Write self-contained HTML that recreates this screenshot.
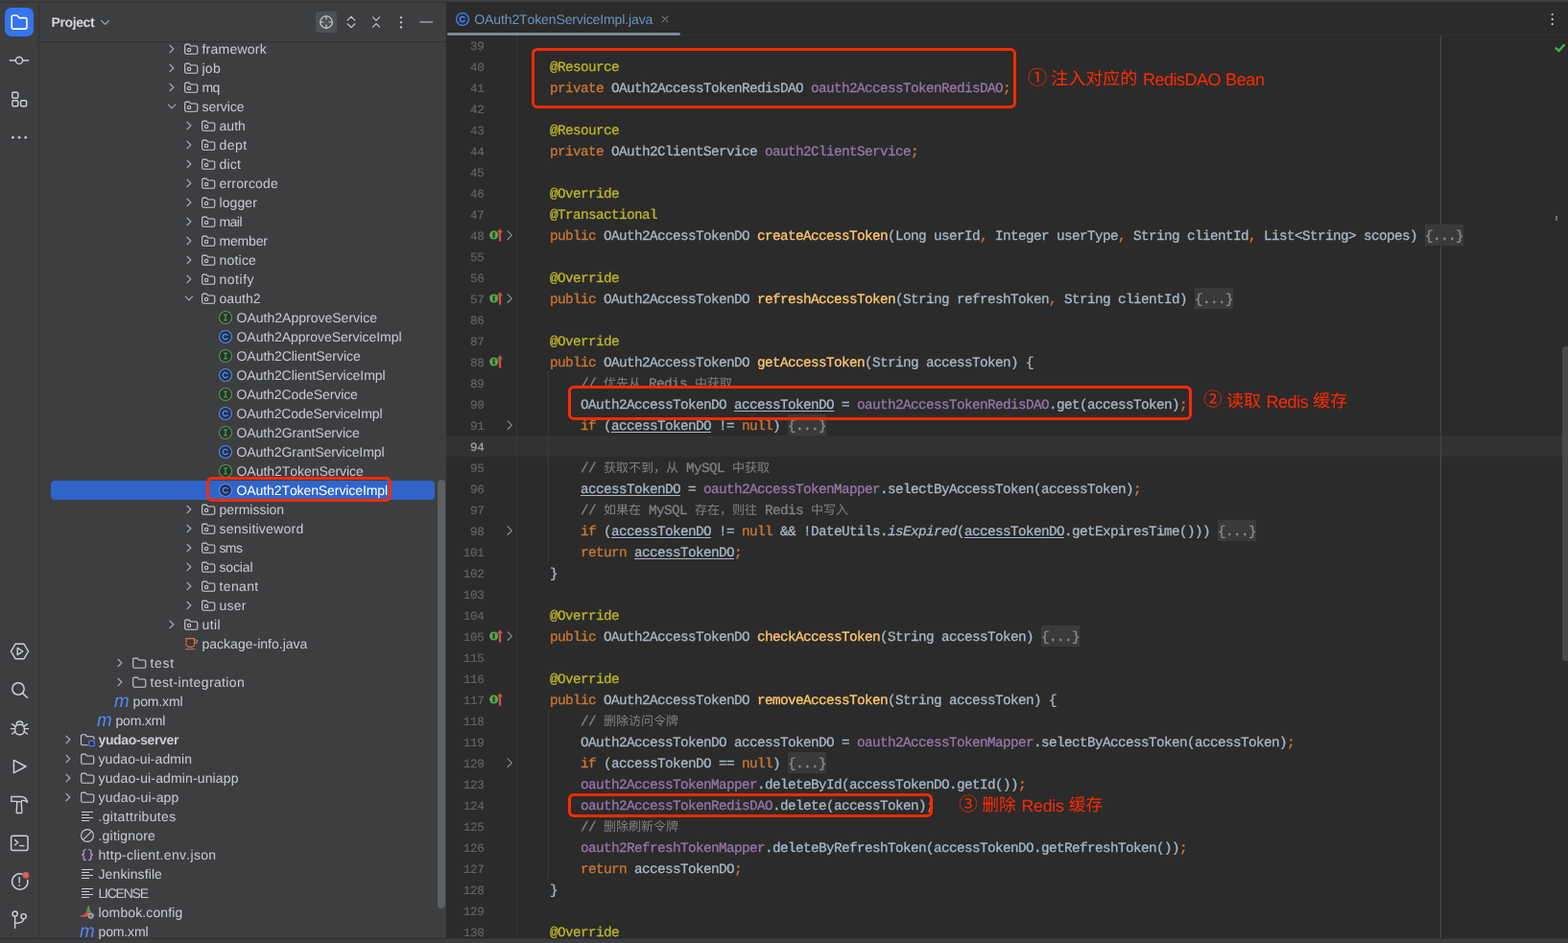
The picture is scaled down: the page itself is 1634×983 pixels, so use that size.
<!DOCTYPE html>
<html lang="en"><head><meta charset="utf-8"><title>OAuth2TokenServiceImpl.java</title>
<style>
*{box-sizing:border-box;margin:0;padding:0}
html,body{width:1634px;height:983px;overflow:hidden;background:#2b2b2b}
body{position:relative;text-rendering:geometricPrecision;font-kerning:none;font-family:"Liberation Sans",sans-serif;font-size:14px;color:#c9cbcf}
.abs{position:absolute}
#TL{position:absolute;left:0;top:0;width:465px;height:983px}
#L{position:absolute;left:0;top:0;width:1634px;height:983px;will-change:transform}
svg{display:block;overflow:visible}
svg.cj{display:inline-block;vertical-align:-0.12em;fill:currentColor}
.ic{position:absolute;fill:none;stroke:#ced0d6;stroke-width:1.2;stroke-linecap:round;stroke-linejoin:round}
#strip{position:absolute;left:0;top:3px;width:41px;height:975px;background:#3d3e40;border-right:1px solid #323232}
#panel{position:absolute;left:41px;top:3px;width:424px;height:975px;background:#3d3e40;overflow:hidden}
#phead{position:absolute;left:0;top:0;width:424px;height:41px;background:#3d3e40;border-bottom:1px solid #323232;z-index:3}
#topband{position:absolute;left:0;top:0;width:1634px;height:3px;background:#3d3e40;border-bottom:1px solid #323232}
#botband{position:absolute;left:0;top:978px;width:1634px;height:5px;background:#3d3e40;border-top:1px solid #323232}
.row{position:absolute;left:0;width:424px;height:20px;line-height:20px;white-space:nowrap}
.row .lb{position:absolute;top:0;white-space:pre}
.row b{font-weight:bold}
#editor{position:absolute;left:465px;top:2px;width:1169px;height:976px;background:#2b2b2b;overflow:hidden}
.ln{position:absolute;left:0;width:1169px;height:22px;line-height:22px;white-space:pre}
.no{position:absolute;right:1130px;top:0;font-family:"Liberation Mono",monospace;font-size:12.6px;letter-spacing:-0.36px;color:#606366;-webkit-text-stroke:0.2px currentColor}
.cd{position:absolute;left:76px;top:0;font-family:"Liberation Mono",monospace;font-size:14.3px;letter-spacing:-0.58px;color:#a9b7c6;-webkit-text-stroke:0.3px currentColor}
.cd svg.cj{vertical-align:-2px;margin:0}
.k{color:#cc7832}.a{color:#bbb529}.m{color:#ffc66d}.f{color:#9876aa}.c{color:#808080}
.u{text-decoration:underline;text-underline-offset:2px;text-decoration-thickness:1px}
.i{font-style:italic}
.fd{display:inline-block;height:22px;background:#3a3a3a;color:#8c8c8c}
.rb{position:absolute;border:solid #ff2a00;border-width:3.3px 3.6px;border-radius:6px}
.an{position:absolute;color:#ff2a00;font-size:18px;line-height:22px;white-space:pre}
.cjt{position:absolute;white-space:pre;font-family:"Liberation Sans","Noto Sans CJK SC",sans-serif;letter-spacing:0}
.cjc{color:#808080;font-size:13px;line-height:13px;height:13px}
.cja{color:#ff2a00}
</style></head>
<body><div id="L"><div id="topband"></div><div id="botband"></div><div id="strip"></div><div class="abs" style="left:5px;top:8px;width:30px;height:30px;border-radius:7px;background:#3574f0"></div><svg class="ic" style="left:10px;top:13px;width:20px;height:20px;" viewBox="0 0 20 20"><path d="M2.2 4.6a1.6 1.6 0 0 1 1.6-1.6h3.9l2.2 2.6h6.4a1.6 1.6 0 0 1 1.6 1.6v8.3a1.6 1.6 0 0 1-1.6 1.6h-12.5a1.6 1.6 0 0 1-1.6-1.6z" stroke="#fff" stroke-width="1.6"/></svg><svg class="ic" style="left:10px;top:53px;width:20px;height:20px;stroke-width:1.45" viewBox="0 0 20 20"><path d="M0.4 10h5.4M14.2 10h5.4"/><circle cx="10" cy="10" r="3.6"/></svg><svg class="ic" style="left:10px;top:93px;width:20px;height:20px;stroke-width:1.45" viewBox="0 0 20 20"><rect x="2.8" y="3.2" width="6" height="6" rx="1.5"/><rect x="2.8" y="11.7" width="6" height="6" rx="1.5"/><rect x="11.6" y="11.7" width="6" height="6" rx="1.5"/></svg><svg class="ic" style="left:10px;top:133px;width:20px;height:20px;fill:#ced0d6;stroke:none" viewBox="0 0 20 20"><circle cx="3.4" cy="10.3" r="1.35"/><circle cx="10.1" cy="10.3" r="1.35"/><circle cx="16.7" cy="10.3" r="1.35"/></svg><svg class="ic" style="left:10px;top:669px;width:21px;height:20px;stroke-width:1.45" viewBox="0 0 21 20"><path d="M6 2.3h9l4.6 7.7-4.6 7.7h-9l-4.6-7.7z"/><path d="M8.2 6.4l5.6 3.6-5.6 3.6z"/></svg><svg class="ic" style="left:9px;top:708px;width:22px;height:22px;stroke-width:1.5" viewBox="0 0 22 22"><circle cx="10" cy="10" r="6.2"/><path d="M14.6 14.6l4.8 4.6"/></svg><svg class="ic" style="left:10px;top:748px;width:21px;height:22px;stroke-width:1.45" viewBox="0 0 21 22"><path d="M7.2 7.2a3.3 3.3 0 0 1 6.6 0"/><rect x="5.6" y="7.2" width="9.8" height="10.6" rx="4.6"/><path d="M5.4 11.6h-4M15.6 11.6h4M5.8 8.8l-3.2-2M15.2 8.8l3.2-2M5.8 14.8l-3.2 2.2M15.2 14.8l3.2 2.2"/></svg><svg class="ic" style="left:10px;top:789px;width:21px;height:20px;stroke-width:1.5" viewBox="0 0 21 20"><path d="M4.4 3.4l12.6 6.6-12.6 6.6z"/></svg><svg class="ic" style="left:9px;top:828px;width:22px;height:22px;stroke-width:1.4" viewBox="0 0 22 22"><path d="M2.800 2.500h10.400c3.200 0 5.400 2.200 6.400 5.700c-1.800-1.600-3.400-2-5.800-1.800l-0.400 1.200h-4.800l-0.400-0.200h-5.400z"/><path d="M8.800 7.600l-0.600 10.800a1 1 0 0 0 1 1.100h3.600a1 1 0 0 0 1-1.100l-0.600-10.800"/></svg><svg class="ic" style="left:10px;top:869px;width:21px;height:20px;stroke-width:1.45" viewBox="0 0 21 20"><rect x="1.6" y="2.2" width="17.4" height="15.2" rx="2"/><path d="M5.6 6.6l3.2 2.6-3.2 2.6M10.6 12.6h4.4"/></svg><svg class="ic" style="left:10px;top:908px;width:22px;height:22px;stroke-width:1.45" viewBox="0 0 22 22"><path d="M13.2 3.2a8.2 8.2 0 1 0 5.6 6.2"/><path d="M10.2 6.6v5.4"/><circle cx="10.2" cy="14.8" r="0.9" fill="#ced0d6" stroke="none"/><circle cx="17" cy="4.4" r="3.3" fill="#db5c5c" stroke="none"/></svg><svg class="ic" style="left:10px;top:948px;width:21px;height:22px;stroke-width:1.45" viewBox="0 0 21 22"><circle cx="5.6" cy="4.6" r="2.6"/><circle cx="14.6" cy="7.2" r="2.6"/><path d="M5.6 7.2v12.2M14.6 9.8c0 3.6-4 4.6-9 4.6"/></svg><div id="panel"></div><div class="abs" style="left:41px;top:43px;width:424px;height:1px;background:#323232"></div><div class="abs" style="left:53.5px;top:13px;height:20px;line-height:20px;font-weight:bold;font-size:14px;color:#d4d6da;white-space:pre;letter-spacing:-0.395px;">Project</div><svg class="ic" style="left:105px;top:20px;width:9px;height:7px;stroke:#a9acb1;stroke-width:1.2" viewBox="0 0 9 7"><path d="M0.6 1.6l3.9 3.8 3.9-3.8"/></svg><div class="abs" style="left:329px;top:12px;width:22px;height:22px;border-radius:4px;background:#4e5154"></div><svg class="ic" style="left:332px;top:15px;width:16px;height:16px;stroke-width:1.15" viewBox="0 0 16 16"><circle cx="8" cy="8" r="6.3"/><path d="M8 1.7v3.4M8 10.9v3.4M1.7 8h3.4M10.9 8h3.4"/></svg><svg class="ic" style="left:358px;top:15px;width:16px;height:16px;stroke-width:1.15" viewBox="0 0 16 16"><path d="M4.2 6.2l3.8-3.8 3.8 3.8M4.2 9.8l3.8 3.8 3.8-3.8"/></svg><svg class="ic" style="left:384px;top:15px;width:16px;height:16px;stroke-width:1.05" viewBox="0 0 16 16"><path d="M4.500 2.800l3.500 3.500 3.500-3.500M4.500 13.200l3.500-3.500 3.500 3.500"/></svg><svg class="ic" style="left:410px;top:15px;width:16px;height:16px;fill:#ced0d6;stroke:none" viewBox="0 0 16 16"><circle cx="8" cy="3.3" r="1.15"/><circle cx="8" cy="8.3" r="1.15"/><circle cx="8" cy="13.4" r="1.15"/></svg><svg class="ic" style="left:436px;top:15px;width:16px;height:16px;stroke-width:1.15" viewBox="0 0 16 16"><path d="M1.9 8h12.7"/></svg><svg class="ic" style="left:175.1px;top:43px;width:8px;height:16px;stroke:#a9acb1;stroke-width:1.1" viewBox="0 0 8 16"><path d="M2 4.250l3.900 3.750-3.900 3.750"/></svg><svg class="ic" style="left:191.0px;top:42.8px;width:16px;height:16px;stroke-width:1.1" viewBox="0 0 16 16"><path d="M1.7 4.6a1.5 1.5 0 0 1 1.5-1.5h2.9l1.6 1.9h5.6a1.5 1.5 0 0 1 1.5 1.5v5.3a1.5 1.5 0 0 1-1.5 1.5h-10.100a1.5 1.5 0 0 1-1.5-1.5z"/><circle cx="6.1" cy="8.900" r="1.650"/></svg><svg class="ic" style="left:175.1px;top:63px;width:8px;height:16px;stroke:#a9acb1;stroke-width:1.1" viewBox="0 0 8 16"><path d="M2 4.250l3.900 3.750-3.900 3.750"/></svg><svg class="ic" style="left:191.0px;top:62.8px;width:16px;height:16px;stroke-width:1.1" viewBox="0 0 16 16"><path d="M1.7 4.6a1.5 1.5 0 0 1 1.5-1.5h2.9l1.6 1.9h5.6a1.5 1.5 0 0 1 1.5 1.5v5.3a1.5 1.5 0 0 1-1.5 1.5h-10.100a1.5 1.5 0 0 1-1.5-1.5z"/><circle cx="6.1" cy="8.900" r="1.650"/></svg><svg class="ic" style="left:175.1px;top:83px;width:8px;height:16px;stroke:#a9acb1;stroke-width:1.1" viewBox="0 0 8 16"><path d="M2 4.250l3.900 3.750-3.900 3.750"/></svg><svg class="ic" style="left:191.0px;top:82.8px;width:16px;height:16px;stroke-width:1.1" viewBox="0 0 16 16"><path d="M1.7 4.6a1.5 1.5 0 0 1 1.5-1.5h2.9l1.6 1.9h5.6a1.5 1.5 0 0 1 1.5 1.5v5.3a1.5 1.5 0 0 1-1.5 1.5h-10.100a1.5 1.5 0 0 1-1.5-1.5z"/><circle cx="6.1" cy="8.900" r="1.650"/></svg><svg class="ic" style="left:173.1px;top:103.4px;width:12px;height:16px;stroke:#a9acb1;stroke-width:1.1" viewBox="0 0 12 16"><path d="M2.200 5.900l3.800 3.900 3.800-3.900"/></svg><svg class="ic" style="left:191.0px;top:102.8px;width:16px;height:16px;stroke-width:1.1" viewBox="0 0 16 16"><path d="M1.7 4.6a1.5 1.5 0 0 1 1.5-1.5h2.9l1.6 1.9h5.6a1.5 1.5 0 0 1 1.5 1.5v5.3a1.5 1.5 0 0 1-1.5 1.5h-10.100a1.5 1.5 0 0 1-1.5-1.5z"/><circle cx="6.1" cy="8.900" r="1.650"/></svg><svg class="ic" style="left:193.1px;top:123px;width:8px;height:16px;stroke:#a9acb1;stroke-width:1.1" viewBox="0 0 8 16"><path d="M2 4.250l3.900 3.750-3.900 3.750"/></svg><svg class="ic" style="left:209.0px;top:122.8px;width:16px;height:16px;stroke-width:1.1" viewBox="0 0 16 16"><path d="M1.7 4.6a1.5 1.5 0 0 1 1.5-1.5h2.9l1.6 1.9h5.6a1.5 1.5 0 0 1 1.5 1.5v5.3a1.5 1.5 0 0 1-1.5 1.5h-10.100a1.5 1.5 0 0 1-1.5-1.5z"/><circle cx="6.1" cy="8.900" r="1.650"/></svg><svg class="ic" style="left:193.1px;top:143px;width:8px;height:16px;stroke:#a9acb1;stroke-width:1.1" viewBox="0 0 8 16"><path d="M2 4.250l3.900 3.750-3.900 3.750"/></svg><svg class="ic" style="left:209.0px;top:142.8px;width:16px;height:16px;stroke-width:1.1" viewBox="0 0 16 16"><path d="M1.7 4.6a1.5 1.5 0 0 1 1.5-1.5h2.9l1.6 1.9h5.6a1.5 1.5 0 0 1 1.5 1.5v5.3a1.5 1.5 0 0 1-1.5 1.5h-10.100a1.5 1.5 0 0 1-1.5-1.5z"/><circle cx="6.1" cy="8.900" r="1.650"/></svg><svg class="ic" style="left:193.1px;top:163px;width:8px;height:16px;stroke:#a9acb1;stroke-width:1.1" viewBox="0 0 8 16"><path d="M2 4.250l3.900 3.750-3.900 3.750"/></svg><svg class="ic" style="left:209.0px;top:162.8px;width:16px;height:16px;stroke-width:1.1" viewBox="0 0 16 16"><path d="M1.7 4.6a1.5 1.5 0 0 1 1.5-1.5h2.9l1.6 1.9h5.6a1.5 1.5 0 0 1 1.5 1.5v5.3a1.5 1.5 0 0 1-1.5 1.5h-10.100a1.5 1.5 0 0 1-1.5-1.5z"/><circle cx="6.1" cy="8.900" r="1.650"/></svg><svg class="ic" style="left:193.1px;top:183px;width:8px;height:16px;stroke:#a9acb1;stroke-width:1.1" viewBox="0 0 8 16"><path d="M2 4.250l3.900 3.750-3.900 3.750"/></svg><svg class="ic" style="left:209.0px;top:182.8px;width:16px;height:16px;stroke-width:1.1" viewBox="0 0 16 16"><path d="M1.7 4.6a1.5 1.5 0 0 1 1.5-1.5h2.9l1.6 1.9h5.6a1.5 1.5 0 0 1 1.5 1.5v5.3a1.5 1.5 0 0 1-1.5 1.5h-10.100a1.5 1.5 0 0 1-1.5-1.5z"/><circle cx="6.1" cy="8.900" r="1.650"/></svg><svg class="ic" style="left:193.1px;top:203px;width:8px;height:16px;stroke:#a9acb1;stroke-width:1.1" viewBox="0 0 8 16"><path d="M2 4.250l3.900 3.750-3.900 3.750"/></svg><svg class="ic" style="left:209.0px;top:202.8px;width:16px;height:16px;stroke-width:1.1" viewBox="0 0 16 16"><path d="M1.7 4.6a1.5 1.5 0 0 1 1.5-1.5h2.9l1.6 1.9h5.6a1.5 1.5 0 0 1 1.5 1.5v5.3a1.5 1.5 0 0 1-1.5 1.5h-10.100a1.5 1.5 0 0 1-1.5-1.5z"/><circle cx="6.1" cy="8.900" r="1.650"/></svg><svg class="ic" style="left:193.1px;top:223px;width:8px;height:16px;stroke:#a9acb1;stroke-width:1.1" viewBox="0 0 8 16"><path d="M2 4.250l3.900 3.750-3.900 3.750"/></svg><svg class="ic" style="left:209.0px;top:222.8px;width:16px;height:16px;stroke-width:1.1" viewBox="0 0 16 16"><path d="M1.7 4.6a1.5 1.5 0 0 1 1.5-1.5h2.9l1.6 1.9h5.6a1.5 1.5 0 0 1 1.5 1.5v5.3a1.5 1.5 0 0 1-1.5 1.5h-10.100a1.5 1.5 0 0 1-1.5-1.5z"/><circle cx="6.1" cy="8.900" r="1.650"/></svg><svg class="ic" style="left:193.1px;top:243px;width:8px;height:16px;stroke:#a9acb1;stroke-width:1.1" viewBox="0 0 8 16"><path d="M2 4.250l3.900 3.750-3.900 3.750"/></svg><svg class="ic" style="left:209.0px;top:242.8px;width:16px;height:16px;stroke-width:1.1" viewBox="0 0 16 16"><path d="M1.7 4.6a1.5 1.5 0 0 1 1.5-1.5h2.9l1.6 1.9h5.6a1.5 1.5 0 0 1 1.5 1.5v5.3a1.5 1.5 0 0 1-1.5 1.5h-10.100a1.5 1.5 0 0 1-1.5-1.5z"/><circle cx="6.1" cy="8.900" r="1.650"/></svg><svg class="ic" style="left:193.1px;top:263px;width:8px;height:16px;stroke:#a9acb1;stroke-width:1.1" viewBox="0 0 8 16"><path d="M2 4.250l3.900 3.750-3.900 3.750"/></svg><svg class="ic" style="left:209.0px;top:262.8px;width:16px;height:16px;stroke-width:1.1" viewBox="0 0 16 16"><path d="M1.7 4.6a1.5 1.5 0 0 1 1.5-1.5h2.9l1.6 1.9h5.6a1.5 1.5 0 0 1 1.5 1.5v5.3a1.5 1.5 0 0 1-1.5 1.5h-10.100a1.5 1.5 0 0 1-1.5-1.5z"/><circle cx="6.1" cy="8.900" r="1.650"/></svg><svg class="ic" style="left:193.1px;top:283px;width:8px;height:16px;stroke:#a9acb1;stroke-width:1.1" viewBox="0 0 8 16"><path d="M2 4.250l3.900 3.750-3.900 3.750"/></svg><svg class="ic" style="left:209.0px;top:282.8px;width:16px;height:16px;stroke-width:1.1" viewBox="0 0 16 16"><path d="M1.7 4.6a1.5 1.5 0 0 1 1.5-1.5h2.9l1.6 1.9h5.6a1.5 1.5 0 0 1 1.5 1.5v5.3a1.5 1.5 0 0 1-1.5 1.5h-10.100a1.5 1.5 0 0 1-1.5-1.5z"/><circle cx="6.1" cy="8.900" r="1.650"/></svg><svg class="ic" style="left:191.1px;top:303.4px;width:12px;height:16px;stroke:#a9acb1;stroke-width:1.1" viewBox="0 0 12 16"><path d="M2.200 5.900l3.800 3.900 3.800-3.900"/></svg><svg class="ic" style="left:209.0px;top:302.8px;width:16px;height:16px;stroke-width:1.1" viewBox="0 0 16 16"><path d="M1.7 4.6a1.5 1.5 0 0 1 1.5-1.5h2.9l1.6 1.9h5.6a1.5 1.5 0 0 1 1.5 1.5v5.3a1.5 1.5 0 0 1-1.5 1.5h-10.100a1.5 1.5 0 0 1-1.5-1.5z"/><circle cx="6.1" cy="8.900" r="1.650"/></svg><svg class="ic" style="left:227.0px;top:322.8px;width:16px;height:16px;stroke-width:1.1" viewBox="0 0 16 16"><circle cx="8" cy="8" r="6.500" fill="#253627" stroke="#57965c"/><path d="M6 5.200h4M8 5.200v5.600M6 10.800h4" stroke="#57965c" stroke-width="1.2" stroke-linecap="butt"/></svg><svg class="ic" style="left:227.0px;top:342.8px;width:16px;height:16px;stroke-width:1.1" viewBox="0 0 16 16"><circle cx="8" cy="8" r="6.500" fill="#25324d" stroke="#548af7"/><path d="M10.100 6.400a2.700 2.700 0 1 0 0 3.200" stroke="#548af7" stroke-width="1.25"/></svg><svg class="ic" style="left:227.0px;top:362.8px;width:16px;height:16px;stroke-width:1.1" viewBox="0 0 16 16"><circle cx="8" cy="8" r="6.500" fill="#253627" stroke="#57965c"/><path d="M6 5.200h4M8 5.200v5.600M6 10.800h4" stroke="#57965c" stroke-width="1.2" stroke-linecap="butt"/></svg><svg class="ic" style="left:227.0px;top:382.8px;width:16px;height:16px;stroke-width:1.1" viewBox="0 0 16 16"><circle cx="8" cy="8" r="6.500" fill="#25324d" stroke="#548af7"/><path d="M10.100 6.400a2.700 2.700 0 1 0 0 3.200" stroke="#548af7" stroke-width="1.25"/></svg><svg class="ic" style="left:227.0px;top:402.8px;width:16px;height:16px;stroke-width:1.1" viewBox="0 0 16 16"><circle cx="8" cy="8" r="6.500" fill="#253627" stroke="#57965c"/><path d="M6 5.200h4M8 5.200v5.600M6 10.800h4" stroke="#57965c" stroke-width="1.2" stroke-linecap="butt"/></svg><svg class="ic" style="left:227.0px;top:422.8px;width:16px;height:16px;stroke-width:1.1" viewBox="0 0 16 16"><circle cx="8" cy="8" r="6.500" fill="#25324d" stroke="#548af7"/><path d="M10.100 6.400a2.700 2.700 0 1 0 0 3.200" stroke="#548af7" stroke-width="1.25"/></svg><svg class="ic" style="left:227.0px;top:442.8px;width:16px;height:16px;stroke-width:1.1" viewBox="0 0 16 16"><circle cx="8" cy="8" r="6.500" fill="#253627" stroke="#57965c"/><path d="M6 5.200h4M8 5.200v5.600M6 10.800h4" stroke="#57965c" stroke-width="1.2" stroke-linecap="butt"/></svg><svg class="ic" style="left:227.0px;top:462.8px;width:16px;height:16px;stroke-width:1.1" viewBox="0 0 16 16"><circle cx="8" cy="8" r="6.500" fill="#25324d" stroke="#548af7"/><path d="M10.100 6.400a2.700 2.700 0 1 0 0 3.200" stroke="#548af7" stroke-width="1.25"/></svg><svg class="ic" style="left:227.0px;top:482.8px;width:16px;height:16px;stroke-width:1.1" viewBox="0 0 16 16"><circle cx="8" cy="8" r="6.500" fill="#253627" stroke="#57965c"/><path d="M6 5.200h4M8 5.200v5.600M6 10.800h4" stroke="#57965c" stroke-width="1.2" stroke-linecap="butt"/></svg><div class="abs" style="left:53px;top:501px;width:400px;height:20px;border-radius:4px;background:#2f65ca"></div><svg class="ic" style="left:227.0px;top:502.8px;width:16px;height:16px;stroke-width:1.1" viewBox="0 0 16 16"><circle cx="8" cy="8" r="6.500" fill="#25324d" stroke="#548af7"/><path d="M10.100 6.400a2.700 2.700 0 1 0 0 3.200" stroke="#548af7" stroke-width="1.25"/></svg><svg class="ic" style="left:193.1px;top:523px;width:8px;height:16px;stroke:#a9acb1;stroke-width:1.1" viewBox="0 0 8 16"><path d="M2 4.250l3.900 3.750-3.900 3.750"/></svg><svg class="ic" style="left:209.0px;top:522.8px;width:16px;height:16px;stroke-width:1.1" viewBox="0 0 16 16"><path d="M1.7 4.6a1.5 1.5 0 0 1 1.5-1.5h2.9l1.6 1.9h5.6a1.5 1.5 0 0 1 1.5 1.5v5.3a1.5 1.5 0 0 1-1.5 1.5h-10.100a1.5 1.5 0 0 1-1.5-1.5z"/><circle cx="6.1" cy="8.900" r="1.650"/></svg><svg class="ic" style="left:193.1px;top:543px;width:8px;height:16px;stroke:#a9acb1;stroke-width:1.1" viewBox="0 0 8 16"><path d="M2 4.250l3.900 3.750-3.900 3.750"/></svg><svg class="ic" style="left:209.0px;top:542.8px;width:16px;height:16px;stroke-width:1.1" viewBox="0 0 16 16"><path d="M1.7 4.6a1.5 1.5 0 0 1 1.5-1.5h2.9l1.6 1.9h5.6a1.5 1.5 0 0 1 1.5 1.5v5.3a1.5 1.5 0 0 1-1.5 1.5h-10.100a1.5 1.5 0 0 1-1.5-1.5z"/><circle cx="6.1" cy="8.900" r="1.650"/></svg><svg class="ic" style="left:193.1px;top:563px;width:8px;height:16px;stroke:#a9acb1;stroke-width:1.1" viewBox="0 0 8 16"><path d="M2 4.250l3.900 3.750-3.900 3.750"/></svg><svg class="ic" style="left:209.0px;top:562.8px;width:16px;height:16px;stroke-width:1.1" viewBox="0 0 16 16"><path d="M1.7 4.6a1.5 1.5 0 0 1 1.5-1.5h2.9l1.6 1.9h5.6a1.5 1.5 0 0 1 1.5 1.5v5.3a1.5 1.5 0 0 1-1.5 1.5h-10.100a1.5 1.5 0 0 1-1.5-1.5z"/><circle cx="6.1" cy="8.900" r="1.650"/></svg><svg class="ic" style="left:193.1px;top:583px;width:8px;height:16px;stroke:#a9acb1;stroke-width:1.1" viewBox="0 0 8 16"><path d="M2 4.250l3.900 3.750-3.900 3.750"/></svg><svg class="ic" style="left:209.0px;top:582.8px;width:16px;height:16px;stroke-width:1.1" viewBox="0 0 16 16"><path d="M1.7 4.6a1.5 1.5 0 0 1 1.5-1.5h2.9l1.6 1.9h5.6a1.5 1.5 0 0 1 1.5 1.5v5.3a1.5 1.5 0 0 1-1.5 1.5h-10.100a1.5 1.5 0 0 1-1.5-1.5z"/><circle cx="6.1" cy="8.900" r="1.650"/></svg><svg class="ic" style="left:193.1px;top:603px;width:8px;height:16px;stroke:#a9acb1;stroke-width:1.1" viewBox="0 0 8 16"><path d="M2 4.250l3.900 3.750-3.900 3.750"/></svg><svg class="ic" style="left:209.0px;top:602.8px;width:16px;height:16px;stroke-width:1.1" viewBox="0 0 16 16"><path d="M1.7 4.6a1.5 1.5 0 0 1 1.5-1.5h2.9l1.6 1.9h5.6a1.5 1.5 0 0 1 1.5 1.5v5.3a1.5 1.5 0 0 1-1.5 1.5h-10.100a1.5 1.5 0 0 1-1.5-1.5z"/><circle cx="6.1" cy="8.900" r="1.650"/></svg><svg class="ic" style="left:193.1px;top:623px;width:8px;height:16px;stroke:#a9acb1;stroke-width:1.1" viewBox="0 0 8 16"><path d="M2 4.250l3.900 3.750-3.900 3.750"/></svg><svg class="ic" style="left:209.0px;top:622.8px;width:16px;height:16px;stroke-width:1.1" viewBox="0 0 16 16"><path d="M1.7 4.6a1.5 1.5 0 0 1 1.5-1.5h2.9l1.6 1.9h5.6a1.5 1.5 0 0 1 1.5 1.5v5.3a1.5 1.5 0 0 1-1.5 1.5h-10.100a1.5 1.5 0 0 1-1.5-1.5z"/><circle cx="6.1" cy="8.900" r="1.650"/></svg><svg class="ic" style="left:175.1px;top:643px;width:8px;height:16px;stroke:#a9acb1;stroke-width:1.1" viewBox="0 0 8 16"><path d="M2 4.250l3.900 3.750-3.900 3.750"/></svg><svg class="ic" style="left:191.0px;top:642.8px;width:16px;height:16px;stroke-width:1.1" viewBox="0 0 16 16"><path d="M1.7 4.6a1.5 1.5 0 0 1 1.5-1.5h2.9l1.6 1.9h5.6a1.5 1.5 0 0 1 1.5 1.5v5.3a1.5 1.5 0 0 1-1.5 1.5h-10.100a1.5 1.5 0 0 1-1.5-1.5z"/><circle cx="6.1" cy="8.900" r="1.650"/></svg><svg class="ic" style="left:191.0px;top:662.8px;width:16px;height:16px;stroke-width:1.1" viewBox="0 0 16 16"><path d="M3 2.600h8.500v5.400a3.400 3.400 0 0 1-3.400 3.400h-1.700a3.400 3.400 0 0 1-3.400-3.400z" fill="#45322b" stroke="#c77d55"/><path d="M11.500 4h1.300a1.700 1.700 0 0 1 0 3.400h-1.300" stroke="#c77d55"/><path d="M2.600 13.700h9.300" stroke="#c77d55"/></svg><svg class="ic" style="left:121.1px;top:683px;width:8px;height:16px;stroke:#a9acb1;stroke-width:1.1" viewBox="0 0 8 16"><path d="M2 4.250l3.900 3.750-3.900 3.750"/></svg><svg class="ic" style="left:137.0px;top:682.8px;width:16px;height:16px;stroke-width:1.1" viewBox="0 0 16 16"><path d="M1.7 4.6a1.5 1.5 0 0 1 1.5-1.5h2.9l1.6 1.9h5.6a1.5 1.5 0 0 1 1.5 1.5v5.3a1.5 1.5 0 0 1-1.5 1.5h-10.100a1.5 1.5 0 0 1-1.5-1.5z"/></svg><svg class="ic" style="left:121.1px;top:703px;width:8px;height:16px;stroke:#a9acb1;stroke-width:1.1" viewBox="0 0 8 16"><path d="M2 4.250l3.900 3.750-3.900 3.750"/></svg><svg class="ic" style="left:137.0px;top:702.8px;width:16px;height:16px;stroke-width:1.1" viewBox="0 0 16 16"><path d="M1.7 4.6a1.5 1.5 0 0 1 1.5-1.5h2.9l1.6 1.9h5.6a1.5 1.5 0 0 1 1.5 1.5v5.3a1.5 1.5 0 0 1-1.5 1.5h-10.100a1.5 1.5 0 0 1-1.5-1.5z"/></svg><div class="abs" style="left:118.5px;top:720.8px;width:18px;height:20px;line-height:20px;font-style:italic;font-size:19.500px;color:#548af7;transform:scaleX(.96);transform-origin:0 50%">m</div><div class="abs" style="left:100.5px;top:740.8px;width:18px;height:20px;line-height:20px;font-style:italic;font-size:19.500px;color:#548af7;transform:scaleX(.96);transform-origin:0 50%">m</div><svg class="ic" style="left:67.1px;top:763px;width:8px;height:16px;stroke:#a9acb1;stroke-width:1.1" viewBox="0 0 8 16"><path d="M2 4.250l3.900 3.750-3.900 3.750"/></svg><svg class="ic" style="left:83.0px;top:762.8px;width:16px;height:16px;stroke-width:1.1" viewBox="0 0 16 16"><path d="M8.2 13.700h-5.200a1.5 1.5 0 0 1-1.5-1.500v-7.900a1.5 1.5 0 0 1 1.5-1.500h3l1.700 2h5.800a1.500 1.500 0 0 1 1.500 1.500v1.200"/><rect x="9.800" y="9.200" width="5.600" height="5.600" rx="1.400" fill="#25324d" stroke="#548af7"/></svg><svg class="ic" style="left:67.1px;top:783px;width:8px;height:16px;stroke:#a9acb1;stroke-width:1.1" viewBox="0 0 8 16"><path d="M2 4.250l3.900 3.750-3.900 3.750"/></svg><svg class="ic" style="left:83.0px;top:782.8px;width:16px;height:16px;stroke-width:1.1" viewBox="0 0 16 16"><path d="M1.7 4.6a1.5 1.5 0 0 1 1.5-1.5h2.9l1.6 1.9h5.6a1.5 1.5 0 0 1 1.5 1.5v5.3a1.5 1.5 0 0 1-1.5 1.5h-10.100a1.5 1.5 0 0 1-1.5-1.5z"/></svg><svg class="ic" style="left:67.1px;top:803px;width:8px;height:16px;stroke:#a9acb1;stroke-width:1.1" viewBox="0 0 8 16"><path d="M2 4.250l3.900 3.750-3.900 3.750"/></svg><svg class="ic" style="left:83.0px;top:802.8px;width:16px;height:16px;stroke-width:1.1" viewBox="0 0 16 16"><path d="M1.7 4.6a1.5 1.5 0 0 1 1.5-1.5h2.9l1.6 1.9h5.6a1.5 1.5 0 0 1 1.5 1.5v5.3a1.5 1.5 0 0 1-1.5 1.5h-10.100a1.5 1.5 0 0 1-1.5-1.5z"/></svg><svg class="ic" style="left:67.1px;top:823px;width:8px;height:16px;stroke:#a9acb1;stroke-width:1.1" viewBox="0 0 8 16"><path d="M2 4.250l3.900 3.750-3.900 3.750"/></svg><svg class="ic" style="left:83.0px;top:822.8px;width:16px;height:16px;stroke-width:1.1" viewBox="0 0 16 16"><path d="M1.7 4.6a1.5 1.5 0 0 1 1.5-1.5h2.9l1.6 1.9h5.6a1.5 1.5 0 0 1 1.5 1.5v5.3a1.5 1.5 0 0 1-1.5 1.5h-10.100a1.5 1.5 0 0 1-1.5-1.5z"/></svg><svg class="ic" style="left:83.0px;top:842.8px;width:16px;height:16px;stroke-width:1.1;stroke-linecap:butt" viewBox="0 0 16 16"><path d="M2 3.500h12M2 6.500h8M2 9.500h12M2 12.500h8"/></svg><svg class="ic" style="left:83.0px;top:862.8px;width:16px;height:16px;stroke-width:1.1" viewBox="0 0 16 16"><circle cx="8" cy="8" r="6.400"/><path d="M3.600 12.400l8.800-8.800"/></svg><svg class="ic" style="left:83.0px;top:882.8px;width:16px;height:16px;stroke-width:1.45" viewBox="0 0 16 16"><path d="M6.300 2.600c-1.500 0-2.100 0.700-2.100 2v1.600c0 1-0.500 1.600-1.500 1.800 1 0.200 1.500 0.800 1.500 1.800v1.600c0 1.300 0.600 2 2.100 2M9.700 2.600c1.500 0 2.100 0.700 2.100 2v1.600c0 1 0.500 1.600 1.500 1.800-1 0.200-1.500 0.800-1.500 1.800v1.600c0 1.300-0.600 2-2.100 2" stroke="#b589d6"/></svg><svg class="ic" style="left:83.0px;top:902.8px;width:16px;height:16px;stroke-width:1.1;stroke-linecap:butt" viewBox="0 0 16 16"><path d="M2 3.500h12M2 6.500h8M2 9.500h12M2 12.500h8"/></svg><svg class="ic" style="left:83.0px;top:922.8px;width:16px;height:16px;stroke-width:1.1;stroke-linecap:butt" viewBox="0 0 16 16"><path d="M2 3.500h12M2 6.500h8M2 9.500h12M2 12.500h8"/></svg><svg class="ic" style="left:83.0px;top:942.8px;width:16px;height:16px;stroke-width:1" viewBox="0 0 16 16"><path d="M0.600 11.600c2.800 0.400 5.800-1.200 7-5l2.600 1.600c-1.400 3.800-5.400 5.600-9.600 3.400z" fill="#db4a4a" stroke="#db4a4a" stroke-width="1"/><path d="M7.800 6.400l1.400-4.800 1.600 5.800z" fill="#4f9e55" stroke="#4f9e55" stroke-width="1.2"/><circle cx="11.600" cy="11.600" r="2.300" stroke="#9da0a8" stroke-width="1.600"/><path d="M11.600 8.200v6.800M8.200 11.600h6.800M9.200 9.200l4.800 4.800M14 9.200l-4.800 4.800" stroke="#9da0a8" stroke-width="0.9"/><circle cx="11.600" cy="11.600" r="0.900" fill="#3d3e40" stroke="none"/></svg><div class="abs" style="left:82.5px;top:960.8px;width:18px;height:20px;line-height:20px;font-style:italic;font-size:19.500px;color:#548af7;transform:scaleX(.96);transform-origin:0 50%">m</div><div id="TL"><div class="abs" style="left:210.5px;top:41px;height:20px;line-height:20px;white-space:pre;letter-spacing:0.230px;">framework</div><div class="abs" style="left:210.5px;top:61px;height:20px;line-height:20px;white-space:pre;letter-spacing:0.256px;">job</div><div class="abs" style="left:210.5px;top:81px;height:20px;line-height:20px;white-space:pre;letter-spacing:-0.553px;">mq</div><div class="abs" style="left:210.5px;top:101px;height:20px;line-height:20px;white-space:pre;letter-spacing:-0.060px;">service</div><div class="abs" style="left:228.5px;top:121px;height:20px;line-height:20px;white-space:pre;letter-spacing:0.050px;">auth</div><div class="abs" style="left:228.5px;top:141px;height:20px;line-height:20px;white-space:pre;letter-spacing:0.483px;">dept</div><div class="abs" style="left:228.5px;top:161px;height:20px;line-height:20px;white-space:pre;letter-spacing:0.168px;">dict</div><div class="abs" style="left:228.5px;top:181px;height:20px;line-height:20px;white-space:pre;letter-spacing:0.172px;">errorcode</div><div class="abs" style="left:228.5px;top:201px;height:20px;line-height:20px;white-space:pre;letter-spacing:0.096px;">logger</div><div class="abs" style="left:228.5px;top:221px;height:20px;line-height:20px;white-space:pre;letter-spacing:-0.557px;">mail</div><div class="abs" style="left:228.5px;top:241px;height:20px;line-height:20px;white-space:pre;letter-spacing:-0.172px;">member</div><div class="abs" style="left:228.5px;top:261px;height:20px;line-height:20px;white-space:pre;letter-spacing:0.208px;">notice</div><div class="abs" style="left:228.5px;top:281px;height:20px;line-height:20px;white-space:pre;letter-spacing:0.526px;">notify</div><div class="abs" style="left:228.5px;top:301px;height:20px;line-height:20px;white-space:pre;letter-spacing:0.054px;">oauth2</div><div class="abs" style="left:246.5px;top:321px;height:20px;line-height:20px;white-space:pre;letter-spacing:0.010px;">OAuth2ApproveService</div><div class="abs" style="left:246.5px;top:341px;height:20px;line-height:20px;white-space:pre;letter-spacing:-0.029px;">OAuth2ApproveServiceImpl</div><div class="abs" style="left:246.5px;top:361px;height:20px;line-height:20px;white-space:pre;letter-spacing:-0.042px;">OAuth2ClientService</div><div class="abs" style="left:246.5px;top:381px;height:20px;line-height:20px;white-space:pre;letter-spacing:-0.059px;">OAuth2ClientServiceImpl</div><div class="abs" style="left:246.5px;top:401px;height:20px;line-height:20px;white-space:pre;letter-spacing:-0.078px;">OAuth2CodeService</div><div class="abs" style="left:246.5px;top:421px;height:20px;line-height:20px;white-space:pre;letter-spacing:-0.104px;">OAuth2CodeServiceImpl</div><div class="abs" style="left:246.5px;top:441px;height:20px;line-height:20px;white-space:pre;letter-spacing:-0.057px;">OAuth2GrantService</div><div class="abs" style="left:246.5px;top:461px;height:20px;line-height:20px;white-space:pre;letter-spacing:-0.073px;">OAuth2GrantServiceImpl</div><div class="abs" style="left:246.5px;top:481px;height:20px;line-height:20px;white-space:pre;letter-spacing:-0.046px;">OAuth2TokenService</div><div class="abs" style="left:246.5px;top:501px;height:20px;line-height:20px;white-space:pre;color:#fff;letter-spacing:-0.092px;">OAuth2TokenServiceImpl</div><div class="abs" style="left:228.5px;top:521px;height:20px;line-height:20px;white-space:pre;letter-spacing:-0.011px;">permission</div><div class="abs" style="left:228.5px;top:541px;height:20px;line-height:20px;white-space:pre;letter-spacing:0.239px;">sensitiveword</div><div class="abs" style="left:228.5px;top:561px;height:20px;line-height:20px;white-space:pre;letter-spacing:-0.636px;">sms</div><div class="abs" style="left:228.5px;top:581px;height:20px;line-height:20px;white-space:pre;letter-spacing:-0.139px;">social</div><div class="abs" style="left:228.5px;top:601px;height:20px;line-height:20px;white-space:pre;letter-spacing:0.353px;">tenant</div><div class="abs" style="left:228.5px;top:621px;height:20px;line-height:20px;white-space:pre;letter-spacing:0.222px;">user</div><div class="abs" style="left:210.5px;top:641px;height:20px;line-height:20px;white-space:pre;letter-spacing:0.398px;">util</div><div class="abs" style="left:210.5px;top:661px;height:20px;line-height:20px;white-space:pre;letter-spacing:0.009px;">package-info.java</div><div class="abs" style="left:156.5px;top:681px;height:20px;line-height:20px;white-space:pre;letter-spacing:0.674px;">test</div><div class="abs" style="left:156.5px;top:701px;height:20px;line-height:20px;white-space:pre;letter-spacing:0.379px;">test-integration</div><div class="abs" style="left:138.5px;top:721px;height:20px;line-height:20px;white-space:pre;letter-spacing:-0.134px;">pom.xml</div><div class="abs" style="left:120.5px;top:741px;height:20px;line-height:20px;white-space:pre;letter-spacing:-0.168px;">pom.xml</div><div class="abs" style="left:102.5px;top:761px;height:20px;line-height:20px;white-space:pre;font-weight:bold;letter-spacing:-0.367px;">yudao-server</div><div class="abs" style="left:102.5px;top:781px;height:20px;line-height:20px;white-space:pre;letter-spacing:0.077px;">yudao-ui-admin</div><div class="abs" style="left:102.5px;top:801px;height:20px;line-height:20px;white-space:pre;letter-spacing:0.140px;">yudao-ui-admin-uniapp</div><div class="abs" style="left:102.5px;top:821px;height:20px;line-height:20px;white-space:pre;letter-spacing:0.197px;">yudao-ui-app</div><div class="abs" style="left:102.5px;top:841px;height:20px;line-height:20px;white-space:pre;letter-spacing:0.341px;">.gitattributes</div><div class="abs" style="left:102.5px;top:861px;height:20px;line-height:20px;white-space:pre;letter-spacing:0.201px;">.gitignore</div><div class="abs" style="left:102.5px;top:881px;height:20px;line-height:20px;white-space:pre;letter-spacing:0.309px;">http-client.env.json</div><div class="abs" style="left:102.5px;top:901px;height:20px;line-height:20px;white-space:pre;letter-spacing:0.103px;">Jenkinsfile</div><div class="abs" style="left:102.5px;top:921px;height:20px;line-height:20px;white-space:pre;letter-spacing:-1.237px;">LICENSE</div><div class="abs" style="left:102.5px;top:941px;height:20px;line-height:20px;white-space:pre;letter-spacing:0.109px;">lombok.config</div><div class="abs" style="left:102.5px;top:961px;height:20px;line-height:20px;white-space:pre;letter-spacing:-0.134px;">pom.xml</div></div><div class="rb" style="left:214.500px;top:496.500px;width:193.500px;height:26.500px;border-radius:6px"></div><div class="abs" style="left:456px;top:499.500px;width:7.500px;height:447.500px;border-radius:4px;background:#5d6063"></div><div id="editor"></div><div class="abs" style="left:465px;top:454px;width:1169px;height:22px;background:#323232"></div><div class="abs" style="left:465px;top:36px;width:1169px;height:1px;background:#323232"></div><svg class="ic" style="left:474px;top:12.2px;width:16px;height:16px;stroke-width:1.1" viewBox="0 0 16 16"><circle cx="8" cy="8" r="6.500" fill="#25324d" stroke="#548af7"/><path d="M10.100 6.400a2.700 2.700 0 1 0 0 3.200" stroke="#548af7" stroke-width="1.25"/></svg><div class="abs" style="left:494.3px;top:10.2px;height:20px;line-height:20px;white-space:pre;color:#6897bb;letter-spacing:-0.115px;">OAuth2TokenServiceImpl.java</div><svg class="ic" style="left:688px;top:15.2px;width:10px;height:10px;stroke:#868a91;stroke-width:1.05" viewBox="0 0 10 10"><path d="M2 2l6 6M8 2l-6 6"/></svg><div class="abs" style="left:466px;top:34px;width:243px;height:3px;border-radius:1.500px;background:#7f8998"></div><svg class="ic" style="left:1610px;top:12px;width:16px;height:16px;fill:#ced0d6;stroke:none" viewBox="0 0 16 16"><circle cx="7.700" cy="3" r="1.100"/><circle cx="7.700" cy="8.200" r="1.100"/><circle cx="7.700" cy="13.200" r="1.100"/></svg><svg class="ic" style="left:1618px;top:42px;width:16px;height:14px;stroke:#4caf52;stroke-width:2.300;stroke-linecap:butt;stroke-linejoin:miter" viewBox="0 0 16 14"><path d="M2.900 7.700l3.500 3.300 6.100-6.700"/></svg><div class="abs" style="left:538px;top:37px;width:1px;height:941px;background:#383838"></div><div class="abs" style="left:1501px;top:37px;width:1px;height:941px;background:#48494b"></div><div class="abs" style="left:571px;top:388px;width:1px;height:198px;background:#393939"></div><div class="abs" style="left:571px;top:740px;width:1px;height:176px;background:#393939"></div><div class="abs" style="left:1628px;top:361px;width:8px;height:328px;border-radius:3px;background:#47484a"></div><div class="abs" style="left:1620.500px;top:225px;width:2px;height:5px;background:#6b7280"></div><div class="abs no" style="left:465px;width:39.360px;text-align:right;top:37.5px;height:22px;line-height:22px;color:#606366">39</div><div class="abs no" style="left:465px;width:39.360px;text-align:right;top:59.5px;height:22px;line-height:22px;color:#606366">40</div><span class="cd abs a" style="left:573px;top:60.3px;height:22px;line-height:22px;white-space:pre">@Resource</span><div class="abs no" style="left:465px;width:39.360px;text-align:right;top:81.5px;height:22px;line-height:22px;color:#606366">41</div><span class="cd abs k" style="left:573px;top:82.3px;height:22px;line-height:22px;white-space:pre">private</span><span class="cd abs" style="left:629px;top:82.3px;height:22px;line-height:22px;white-space:pre"> OAuth2AccessTokenRedisDAO </span><span class="cd abs f" style="left:845px;top:82.3px;height:22px;line-height:22px;white-space:pre">oauth2AccessTokenRedisDAO</span><span class="cd abs k" style="left:1045px;top:82.3px;height:22px;line-height:22px;white-space:pre">;</span><div class="abs no" style="left:465px;width:39.360px;text-align:right;top:103.5px;height:22px;line-height:22px;color:#606366">42</div><div class="abs no" style="left:465px;width:39.360px;text-align:right;top:125.5px;height:22px;line-height:22px;color:#606366">43</div><span class="cd abs a" style="left:573px;top:126.3px;height:22px;line-height:22px;white-space:pre">@Resource</span><div class="abs no" style="left:465px;width:39.360px;text-align:right;top:147.5px;height:22px;line-height:22px;color:#606366">44</div><span class="cd abs k" style="left:573px;top:148.3px;height:22px;line-height:22px;white-space:pre">private</span><span class="cd abs" style="left:629px;top:148.3px;height:22px;line-height:22px;white-space:pre"> OAuth2ClientService </span><span class="cd abs f" style="left:797px;top:148.3px;height:22px;line-height:22px;white-space:pre">oauth2ClientService</span><span class="cd abs k" style="left:949px;top:148.3px;height:22px;line-height:22px;white-space:pre">;</span><div class="abs no" style="left:465px;width:39.360px;text-align:right;top:169.5px;height:22px;line-height:22px;color:#606366">45</div><div class="abs no" style="left:465px;width:39.360px;text-align:right;top:191.5px;height:22px;line-height:22px;color:#606366">46</div><span class="cd abs a" style="left:573px;top:192.3px;height:22px;line-height:22px;white-space:pre">@Override</span><div class="abs no" style="left:465px;width:39.360px;text-align:right;top:213.5px;height:22px;line-height:22px;color:#606366">47</div><span class="cd abs a" style="left:573px;top:214.3px;height:22px;line-height:22px;white-space:pre">@Transactional</span><div class="abs no" style="left:465px;width:39.360px;text-align:right;top:235.5px;height:22px;line-height:22px;color:#606366">48</div><svg class="ic" style="left:509px;top:237px;width:16px;height:16px;" viewBox="0 0 16 16"><circle cx="5.600" cy="8" r="4.600" fill="#57a64a" stroke="none"/><path d="M5.600 5.200v5.600" stroke="#2b2b2b" stroke-width="1.900" stroke-linecap="butt"/><path d="M12 14.600v-9.800" stroke="#c75450" stroke-width="2.300" stroke-linecap="butt"/><path d="M9.100 5.300l2.900-4 2.900 4z" fill="#c75450" stroke="none"/></svg><svg class="ic" style="left:527px;top:237px;width:9px;height:16px;stroke:#8f9297;stroke-width:1.100" viewBox="0 0 9 16"><path d="M2 3.900l4.400 4.300-4.400 4.300"/></svg><span class="cd abs k" style="left:573px;top:236.3px;height:22px;line-height:22px;white-space:pre">public</span><span class="cd abs" style="left:621px;top:236.3px;height:22px;line-height:22px;white-space:pre"> OAuth2AccessTokenDO </span><span class="cd abs m" style="left:789px;top:236.3px;height:22px;line-height:22px;white-space:pre">createAccessToken</span><span class="cd abs" style="left:925px;top:236.3px;height:22px;line-height:22px;white-space:pre">(Long userId</span><span class="cd abs k" style="left:1021px;top:236.3px;height:22px;line-height:22px;white-space:pre">,</span><span class="cd abs" style="left:1029px;top:236.3px;height:22px;line-height:22px;white-space:pre"> Integer userType</span><span class="cd abs k" style="left:1165px;top:236.3px;height:22px;line-height:22px;white-space:pre">,</span><span class="cd abs" style="left:1173px;top:236.3px;height:22px;line-height:22px;white-space:pre"> String clientId</span><span class="cd abs k" style="left:1301px;top:236.3px;height:22px;line-height:22px;white-space:pre">,</span><span class="cd abs" style="left:1309px;top:236.3px;height:22px;line-height:22px;white-space:pre"> List&lt;String&gt; scopes) </span><div class="abs" style="left:1485px;top:234px;width:40px;height:22px;background:#3a3a3a"></div><span class="cd abs" style="left:1485px;top:236.3px;height:22px;line-height:22px;color:#8c8c8c">{...}</span><div class="abs no" style="left:465px;width:39.360px;text-align:right;top:257.5px;height:22px;line-height:22px;color:#606366">55</div><div class="abs no" style="left:465px;width:39.360px;text-align:right;top:279.5px;height:22px;line-height:22px;color:#606366">56</div><span class="cd abs a" style="left:573px;top:280.3px;height:22px;line-height:22px;white-space:pre">@Override</span><div class="abs no" style="left:465px;width:39.360px;text-align:right;top:301.5px;height:22px;line-height:22px;color:#606366">57</div><svg class="ic" style="left:509px;top:303px;width:16px;height:16px;" viewBox="0 0 16 16"><circle cx="5.600" cy="8" r="4.600" fill="#57a64a" stroke="none"/><path d="M5.600 5.200v5.600" stroke="#2b2b2b" stroke-width="1.900" stroke-linecap="butt"/><path d="M12 14.600v-9.800" stroke="#c75450" stroke-width="2.300" stroke-linecap="butt"/><path d="M9.100 5.300l2.900-4 2.900 4z" fill="#c75450" stroke="none"/></svg><svg class="ic" style="left:527px;top:303px;width:9px;height:16px;stroke:#8f9297;stroke-width:1.100" viewBox="0 0 9 16"><path d="M2 3.900l4.400 4.300-4.400 4.300"/></svg><span class="cd abs k" style="left:573px;top:302.3px;height:22px;line-height:22px;white-space:pre">public</span><span class="cd abs" style="left:621px;top:302.3px;height:22px;line-height:22px;white-space:pre"> OAuth2AccessTokenDO </span><span class="cd abs m" style="left:789px;top:302.3px;height:22px;line-height:22px;white-space:pre">refreshAccessToken</span><span class="cd abs" style="left:933px;top:302.3px;height:22px;line-height:22px;white-space:pre">(String refreshToken</span><span class="cd abs k" style="left:1093px;top:302.3px;height:22px;line-height:22px;white-space:pre">,</span><span class="cd abs" style="left:1101px;top:302.3px;height:22px;line-height:22px;white-space:pre"> String clientId) </span><div class="abs" style="left:1245px;top:300px;width:40px;height:22px;background:#3a3a3a"></div><span class="cd abs" style="left:1245px;top:302.3px;height:22px;line-height:22px;color:#8c8c8c">{...}</span><div class="abs no" style="left:465px;width:39.360px;text-align:right;top:323.5px;height:22px;line-height:22px;color:#606366">86</div><div class="abs no" style="left:465px;width:39.360px;text-align:right;top:345.5px;height:22px;line-height:22px;color:#606366">87</div><span class="cd abs a" style="left:573px;top:346.3px;height:22px;line-height:22px;white-space:pre">@Override</span><div class="abs no" style="left:465px;width:39.360px;text-align:right;top:367.5px;height:22px;line-height:22px;color:#606366">88</div><svg class="ic" style="left:509px;top:369px;width:16px;height:16px;" viewBox="0 0 16 16"><circle cx="5.600" cy="8" r="4.600" fill="#57a64a" stroke="none"/><path d="M5.600 5.200v5.600" stroke="#2b2b2b" stroke-width="1.900" stroke-linecap="butt"/><path d="M12 14.600v-9.800" stroke="#c75450" stroke-width="2.300" stroke-linecap="butt"/><path d="M9.100 5.300l2.900-4 2.900 4z" fill="#c75450" stroke="none"/></svg><span class="cd abs k" style="left:573px;top:368.3px;height:22px;line-height:22px;white-space:pre">public</span><span class="cd abs" style="left:621px;top:368.3px;height:22px;line-height:22px;white-space:pre"> OAuth2AccessTokenDO </span><span class="cd abs m" style="left:789px;top:368.3px;height:22px;line-height:22px;white-space:pre">getAccessToken</span><span class="cd abs" style="left:901px;top:368.3px;height:22px;line-height:22px;white-space:pre">(String accessToken) {</span><div class="abs no" style="left:465px;width:39.360px;text-align:right;top:389.5px;height:22px;line-height:22px;color:#606366">89</div><span class="cd abs c" style="left:605px;top:390.3px;height:22px;line-height:22px;white-space:pre">// </span><div class="cjt cjc" style="left:629px;top:392.7px;">优先从</div><span class="cd abs c" style="left:668px;top:390.3px;height:22px;line-height:22px;white-space:pre"> Redis </span><div class="cjt cjc" style="left:724px;top:392.7px;">中获取</div><div class="abs no" style="left:465px;width:39.360px;text-align:right;top:411.5px;height:22px;line-height:22px;color:#606366">90</div><span class="cd abs" style="left:541px;top:412.3px;height:22px;line-height:22px;white-space:pre">        OAuth2AccessTokenDO </span><span class="cd abs u" style="left:765px;top:412.3px;height:22px;line-height:22px;white-space:pre">accessTokenDO</span><span class="cd abs" style="left:869px;top:412.3px;height:22px;line-height:22px;white-space:pre"> = </span><span class="cd abs f" style="left:893px;top:412.3px;height:22px;line-height:22px;white-space:pre">oauth2AccessTokenRedisDAO</span><span class="cd abs" style="left:1093px;top:412.3px;height:22px;line-height:22px;white-space:pre">.get(accessToken)</span><span class="cd abs k" style="left:1229px;top:412.3px;height:22px;line-height:22px;white-space:pre">;</span><div class="abs no" style="left:465px;width:39.360px;text-align:right;top:433.5px;height:22px;line-height:22px;color:#606366">91</div><svg class="ic" style="left:527px;top:435px;width:9px;height:16px;stroke:#8f9297;stroke-width:1.100" viewBox="0 0 9 16"><path d="M2 3.900l4.400 4.300-4.400 4.300"/></svg><span class="cd abs k" style="left:605px;top:434.3px;height:22px;line-height:22px;white-space:pre">if</span><span class="cd abs" style="left:621px;top:434.3px;height:22px;line-height:22px;white-space:pre"> (</span><span class="cd abs u" style="left:637px;top:434.3px;height:22px;line-height:22px;white-space:pre">accessTokenDO</span><span class="cd abs" style="left:741px;top:434.3px;height:22px;line-height:22px;white-space:pre"> != </span><span class="cd abs k" style="left:773px;top:434.3px;height:22px;line-height:22px;white-space:pre">null</span><span class="cd abs" style="left:805px;top:434.3px;height:22px;line-height:22px;white-space:pre">) </span><div class="abs" style="left:821px;top:432px;width:40px;height:22px;background:#3a3a3a"></div><span class="cd abs" style="left:821px;top:434.3px;height:22px;line-height:22px;color:#8c8c8c">{...}</span><div class="abs no" style="left:465px;width:39.360px;text-align:right;top:455.5px;height:22px;line-height:22px;color:#a4a3a3">94</div><div class="abs no" style="left:465px;width:39.360px;text-align:right;top:477.5px;height:22px;line-height:22px;color:#606366">95</div><span class="cd abs c" style="left:605px;top:478.3px;height:22px;line-height:22px;white-space:pre">// </span><div class="cjt cjc" style="left:629px;top:480.7px;">获取不到，从</div><span class="cd abs c" style="left:707px;top:478.3px;height:22px;line-height:22px;white-space:pre"> MySQL </span><div class="cjt cjc" style="left:763px;top:480.7px;">中获取</div><div class="abs no" style="left:465px;width:39.360px;text-align:right;top:499.5px;height:22px;line-height:22px;color:#606366">96</div><span class="cd abs u" style="left:605px;top:500.3px;height:22px;line-height:22px;white-space:pre">accessTokenDO</span><span class="cd abs" style="left:709px;top:500.3px;height:22px;line-height:22px;white-space:pre"> = </span><span class="cd abs f" style="left:733px;top:500.3px;height:22px;line-height:22px;white-space:pre">oauth2AccessTokenMapper</span><span class="cd abs" style="left:917px;top:500.3px;height:22px;line-height:22px;white-space:pre">.selectByAccessToken(accessToken)</span><span class="cd abs k" style="left:1181px;top:500.3px;height:22px;line-height:22px;white-space:pre">;</span><div class="abs no" style="left:465px;width:39.360px;text-align:right;top:521.5px;height:22px;line-height:22px;color:#606366">97</div><span class="cd abs c" style="left:605px;top:522.3px;height:22px;line-height:22px;white-space:pre">// </span><div class="cjt cjc" style="left:629px;top:524.7px;">如果在</div><span class="cd abs c" style="left:668px;top:522.3px;height:22px;line-height:22px;white-space:pre"> MySQL </span><div class="cjt cjc" style="left:724px;top:524.7px;">存在，则往</div><span class="cd abs c" style="left:789px;top:522.3px;height:22px;line-height:22px;white-space:pre"> Redis </span><div class="cjt cjc" style="left:845px;top:524.7px;">中写入</div><div class="abs no" style="left:465px;width:39.360px;text-align:right;top:543.5px;height:22px;line-height:22px;color:#606366">98</div><svg class="ic" style="left:527px;top:545px;width:9px;height:16px;stroke:#8f9297;stroke-width:1.100" viewBox="0 0 9 16"><path d="M2 3.900l4.400 4.300-4.400 4.300"/></svg><span class="cd abs k" style="left:605px;top:544.3px;height:22px;line-height:22px;white-space:pre">if</span><span class="cd abs" style="left:621px;top:544.3px;height:22px;line-height:22px;white-space:pre"> (</span><span class="cd abs u" style="left:637px;top:544.3px;height:22px;line-height:22px;white-space:pre">accessTokenDO</span><span class="cd abs" style="left:741px;top:544.3px;height:22px;line-height:22px;white-space:pre"> != </span><span class="cd abs k" style="left:773px;top:544.3px;height:22px;line-height:22px;white-space:pre">null</span><span class="cd abs" style="left:805px;top:544.3px;height:22px;line-height:22px;white-space:pre"> &amp;&amp; !DateUtils.</span><span class="cd abs i" style="left:925px;top:544.3px;height:22px;line-height:22px;white-space:pre">isExpired</span><span class="cd abs" style="left:997px;top:544.3px;height:22px;line-height:22px;white-space:pre">(</span><span class="cd abs u" style="left:1005px;top:544.3px;height:22px;line-height:22px;white-space:pre">accessTokenDO</span><span class="cd abs" style="left:1109px;top:544.3px;height:22px;line-height:22px;white-space:pre">.getExpiresTime())) </span><div class="abs" style="left:1269px;top:542px;width:40px;height:22px;background:#3a3a3a"></div><span class="cd abs" style="left:1269px;top:544.3px;height:22px;line-height:22px;color:#8c8c8c">{...}</span><div class="abs no" style="left:465px;width:39.360px;text-align:right;top:565.5px;height:22px;line-height:22px;color:#606366">101</div><span class="cd abs k" style="left:605px;top:566.3px;height:22px;line-height:22px;white-space:pre">return</span><span class="cd abs u" style="left:661px;top:566.3px;height:22px;line-height:22px;white-space:pre">accessTokenDO</span><span class="cd abs k" style="left:765px;top:566.3px;height:22px;line-height:22px;white-space:pre">;</span><div class="abs no" style="left:465px;width:39.360px;text-align:right;top:587.5px;height:22px;line-height:22px;color:#606366">102</div><span class="cd abs" style="left:541px;top:588.3px;height:22px;line-height:22px;white-space:pre">    }</span><div class="abs no" style="left:465px;width:39.360px;text-align:right;top:609.5px;height:22px;line-height:22px;color:#606366">103</div><div class="abs no" style="left:465px;width:39.360px;text-align:right;top:631.5px;height:22px;line-height:22px;color:#606366">104</div><span class="cd abs a" style="left:573px;top:632.3px;height:22px;line-height:22px;white-space:pre">@Override</span><div class="abs no" style="left:465px;width:39.360px;text-align:right;top:653.5px;height:22px;line-height:22px;color:#606366">105</div><svg class="ic" style="left:509px;top:655px;width:16px;height:16px;" viewBox="0 0 16 16"><circle cx="5.600" cy="8" r="4.600" fill="#57a64a" stroke="none"/><path d="M5.600 5.200v5.600" stroke="#2b2b2b" stroke-width="1.900" stroke-linecap="butt"/><path d="M12 14.600v-9.800" stroke="#c75450" stroke-width="2.300" stroke-linecap="butt"/><path d="M9.100 5.300l2.900-4 2.900 4z" fill="#c75450" stroke="none"/></svg><svg class="ic" style="left:527px;top:655px;width:9px;height:16px;stroke:#8f9297;stroke-width:1.100" viewBox="0 0 9 16"><path d="M2 3.900l4.400 4.300-4.400 4.300"/></svg><span class="cd abs k" style="left:573px;top:654.3px;height:22px;line-height:22px;white-space:pre">public</span><span class="cd abs" style="left:621px;top:654.3px;height:22px;line-height:22px;white-space:pre"> OAuth2AccessTokenDO </span><span class="cd abs m" style="left:789px;top:654.3px;height:22px;line-height:22px;white-space:pre">checkAccessToken</span><span class="cd abs" style="left:917px;top:654.3px;height:22px;line-height:22px;white-space:pre">(String accessToken) </span><div class="abs" style="left:1085px;top:652px;width:40px;height:22px;background:#3a3a3a"></div><span class="cd abs" style="left:1085px;top:654.3px;height:22px;line-height:22px;color:#8c8c8c">{...}</span><div class="abs no" style="left:465px;width:39.360px;text-align:right;top:675.5px;height:22px;line-height:22px;color:#606366">115</div><div class="abs no" style="left:465px;width:39.360px;text-align:right;top:697.5px;height:22px;line-height:22px;color:#606366">116</div><span class="cd abs a" style="left:573px;top:698.3px;height:22px;line-height:22px;white-space:pre">@Override</span><div class="abs no" style="left:465px;width:39.360px;text-align:right;top:719.5px;height:22px;line-height:22px;color:#606366">117</div><svg class="ic" style="left:509px;top:721px;width:16px;height:16px;" viewBox="0 0 16 16"><circle cx="5.600" cy="8" r="4.600" fill="#57a64a" stroke="none"/><path d="M5.600 5.200v5.600" stroke="#2b2b2b" stroke-width="1.900" stroke-linecap="butt"/><path d="M12 14.600v-9.800" stroke="#c75450" stroke-width="2.300" stroke-linecap="butt"/><path d="M9.100 5.300l2.900-4 2.900 4z" fill="#c75450" stroke="none"/></svg><span class="cd abs k" style="left:573px;top:720.3px;height:22px;line-height:22px;white-space:pre">public</span><span class="cd abs" style="left:621px;top:720.3px;height:22px;line-height:22px;white-space:pre"> OAuth2AccessTokenDO </span><span class="cd abs m" style="left:789px;top:720.3px;height:22px;line-height:22px;white-space:pre">removeAccessToken</span><span class="cd abs" style="left:925px;top:720.3px;height:22px;line-height:22px;white-space:pre">(String accessToken) {</span><div class="abs no" style="left:465px;width:39.360px;text-align:right;top:741.5px;height:22px;line-height:22px;color:#606366">118</div><span class="cd abs c" style="left:605px;top:742.3px;height:22px;line-height:22px;white-space:pre">// </span><div class="cjt cjc" style="left:629px;top:744.7px;">删除访问令牌</div><div class="abs no" style="left:465px;width:39.360px;text-align:right;top:763.5px;height:22px;line-height:22px;color:#606366">119</div><span class="cd abs" style="left:541px;top:764.3px;height:22px;line-height:22px;white-space:pre">        OAuth2AccessTokenDO accessTokenDO = </span><span class="cd abs f" style="left:893px;top:764.3px;height:22px;line-height:22px;white-space:pre">oauth2AccessTokenMapper</span><span class="cd abs" style="left:1077px;top:764.3px;height:22px;line-height:22px;white-space:pre">.selectByAccessToken(accessToken)</span><span class="cd abs k" style="left:1341px;top:764.3px;height:22px;line-height:22px;white-space:pre">;</span><div class="abs no" style="left:465px;width:39.360px;text-align:right;top:785.5px;height:22px;line-height:22px;color:#606366">120</div><svg class="ic" style="left:527px;top:787px;width:9px;height:16px;stroke:#8f9297;stroke-width:1.100" viewBox="0 0 9 16"><path d="M2 3.900l4.400 4.300-4.400 4.300"/></svg><span class="cd abs k" style="left:605px;top:786.3px;height:22px;line-height:22px;white-space:pre">if</span><span class="cd abs" style="left:621px;top:786.3px;height:22px;line-height:22px;white-space:pre"> (accessTokenDO == </span><span class="cd abs k" style="left:773px;top:786.3px;height:22px;line-height:22px;white-space:pre">null</span><span class="cd abs" style="left:805px;top:786.3px;height:22px;line-height:22px;white-space:pre">) </span><div class="abs" style="left:821px;top:784px;width:40px;height:22px;background:#3a3a3a"></div><span class="cd abs" style="left:821px;top:786.3px;height:22px;line-height:22px;color:#8c8c8c">{...}</span><div class="abs no" style="left:465px;width:39.360px;text-align:right;top:807.5px;height:22px;line-height:22px;color:#606366">123</div><span class="cd abs f" style="left:605px;top:808.3px;height:22px;line-height:22px;white-space:pre">oauth2AccessTokenMapper</span><span class="cd abs" style="left:789px;top:808.3px;height:22px;line-height:22px;white-space:pre">.deleteById(accessTokenDO.getId())</span><span class="cd abs k" style="left:1061px;top:808.3px;height:22px;line-height:22px;white-space:pre">;</span><div class="abs no" style="left:465px;width:39.360px;text-align:right;top:829.5px;height:22px;line-height:22px;color:#606366">124</div><span class="cd abs f" style="left:605px;top:830.3px;height:22px;line-height:22px;white-space:pre">oauth2AccessTokenRedisDAO</span><span class="cd abs" style="left:805px;top:830.3px;height:22px;line-height:22px;white-space:pre">.delete(accessToken)</span><span class="cd abs k" style="left:965px;top:830.3px;height:22px;line-height:22px;white-space:pre">;</span><div class="abs no" style="left:465px;width:39.360px;text-align:right;top:851.5px;height:22px;line-height:22px;color:#606366">125</div><span class="cd abs c" style="left:605px;top:852.3px;height:22px;line-height:22px;white-space:pre">// </span><div class="cjt cjc" style="left:629px;top:854.7px;">删除刷新令牌</div><div class="abs no" style="left:465px;width:39.360px;text-align:right;top:873.5px;height:22px;line-height:22px;color:#606366">126</div><span class="cd abs f" style="left:605px;top:874.3px;height:22px;line-height:22px;white-space:pre">oauth2RefreshTokenMapper</span><span class="cd abs" style="left:797px;top:874.3px;height:22px;line-height:22px;white-space:pre">.deleteByRefreshToken(accessTokenDO.getRefreshToken())</span><span class="cd abs k" style="left:1229px;top:874.3px;height:22px;line-height:22px;white-space:pre">;</span><div class="abs no" style="left:465px;width:39.360px;text-align:right;top:895.5px;height:22px;line-height:22px;color:#606366">127</div><span class="cd abs k" style="left:605px;top:896.3px;height:22px;line-height:22px;white-space:pre">return</span><span class="cd abs" style="left:653px;top:896.3px;height:22px;line-height:22px;white-space:pre"> accessTokenDO</span><span class="cd abs k" style="left:765px;top:896.3px;height:22px;line-height:22px;white-space:pre">;</span><div class="abs no" style="left:465px;width:39.360px;text-align:right;top:917.5px;height:22px;line-height:22px;color:#606366">128</div><span class="cd abs" style="left:541px;top:918.3px;height:22px;line-height:22px;white-space:pre">    }</span><div class="abs no" style="left:465px;width:39.360px;text-align:right;top:939.5px;height:22px;line-height:22px;color:#606366">129</div><div class="abs no" style="left:465px;width:39.360px;text-align:right;top:961.5px;height:22px;line-height:22px;color:#606366">130</div><span class="cd abs a" style="left:573px;top:962.3px;height:22px;line-height:22px;white-space:pre">@Override</span><div class="rb" style="left:554.2px;top:50px;width:504.8px;height:63px;border-radius:6px"></div><div class="rb" style="left:591.8px;top:402px;width:649.8px;height:35.5px;border-radius:6px"></div><div class="rb" style="left:591.5px;top:826.7px;width:380.9px;height:25.1px;border-radius:6px"></div><div class="cjt cja" style="left:1070.91px;top:71.7px;font-size:20.39px;line-height:20.39px;height:20.39px;">①</div><div class="cjt cja" style="left:1095.3px;top:73px;font-size:18px;line-height:18px;height:18px;">注入对应的</div><div class="an" style="left:1190.9px;top:72.2px;font-size:18px;letter-spacing:-0.490px;">RedisDAO</div><div class="an" style="left:1277.1000000000001px;top:72.2px;font-size:18px;letter-spacing:-0.382px;">Bean</div><div class="cjt cja" style="left:1254.03px;top:407.8px;font-size:19.64px;line-height:19.64px;height:19.64px;">②</div><div class="cjt cja" style="left:1278.1px;top:408.7px;font-size:18px;line-height:18px;height:18px;">读取</div><div class="an" style="left:1319.4px;top:407.5px;font-size:18px;letter-spacing:-0.408px;">Redis</div><div class="cjt cja" style="left:1368.3px;top:408.7px;font-size:18px;line-height:18px;height:18px;">缓存</div><div class="cjt cja" style="left:999.13px;top:829.9px;font-size:19.64px;line-height:19.64px;height:19.64px;">③</div><div class="cjt cja" style="left:1023.3px;top:830.95px;font-size:17.7px;line-height:17.7px;height:17.7px;">删除</div><div class="an" style="left:1064.4px;top:829.2px;font-size:17.7px;letter-spacing:-0.184px;">Redis</div><div class="cjt cja" style="left:1113.8px;top:830.95px;font-size:17.7px;line-height:17.7px;height:17.7px;">缓存</div></div></body></html>
